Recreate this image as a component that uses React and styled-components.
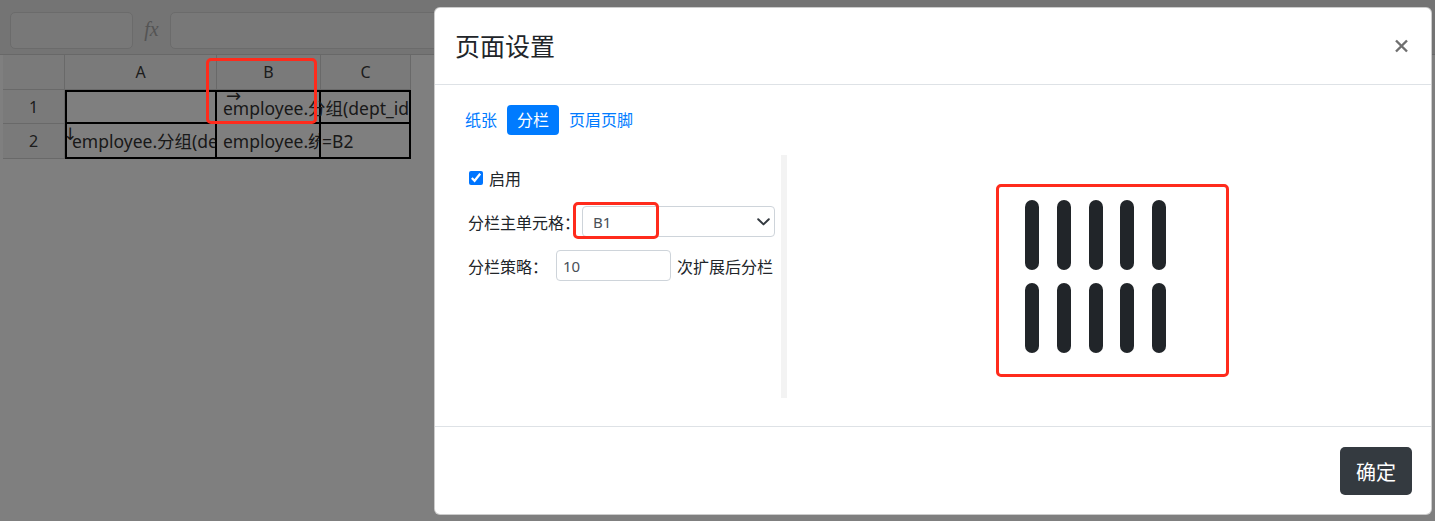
import React from 'react';
import styled, { createGlobalStyle } from 'styled-components';

const GlobalStyle = createGlobalStyle`
  html, body { margin: 0; padding: 0; }
  body {
    font-family: "Noto Sans", "Noto Sans CJK SC", sans-serif;
    overflow: hidden;
    background: #fff;
  }
  *, *::before, *::after { box-sizing: border-box; }
`;

const Page = styled.div`
  position: relative;
  width: 1435px;
  height: 521px;
  overflow: hidden;
  display: flex;
  flex-direction: column;
  background: #fff;
`;

/* ---------- spreadsheet underneath ---------- */
const Toolbar = styled.div`
  height: 55px;
  flex: none;
  display: flex;
  align-items: flex-start;
  padding: 12px 10px 0 10px;
  background: #e8e8e8;
  border-bottom: 1px solid #d0d0d0;
`;

const NameBox = styled.div`
  width: 123px;
  height: 37px;
  background: #f0f0f0;
  border: 1px solid #d6d6d6;
  border-radius: 5px;
`;

const FxIcon = styled.span`
  width: 37px;
  height: 37px;
  line-height: 34px;
  text-align: center;
  font-family: "Liberation Serif", serif;
  font-style: italic;
  font-size: 20px;
  color: #a8a8a8;
`;

const FormulaBox = styled.div`
  flex: 1;
  height: 37px;
  background: #f0f0f0;
  border: 1px solid #d6d6d6;
  border-radius: 5px;
`;

const Grid = styled.div`
  margin-left: 3px;
  width: 408px;
  display: grid;
  grid-template-columns: 62px 152px 104px 90px;
  grid-template-rows: 35px 34px 35px;
  overflow: hidden;
  background: #fff;
  font-family: "Noto Sans", "Noto Sans CJK SC", sans-serif;
`;

const HeadCell = styled.div`
  display: flex;
  align-items: center;
  justify-content: center;
  background: #f4f4f4;
  border-right: 1px solid #d2d2d2;
  border-bottom: 1px solid #d2d2d2;
  font-size: 16px;
  color: #3a3a3a;
`;

const DataCell = styled.div`
  position: relative;
  display: flex;
  align-items: center;
  padding-left: ${p => p.$pad || 6}px;
  white-space: nowrap;
  overflow: ${p => (p.$spill ? 'visible' : 'hidden')};
  border-right: 2px solid #000;
  border-bottom: 2px solid #000;
  border-left: ${p => (p.$l ? '2px solid #000' : 'none')};
  border-top: ${p => (p.$t ? '2px solid #000' : 'none')};
  font-size: 17.5px;
  color: #333;
`;

const DirMark = styled.span`
  position: absolute;
  left: ${p => p.$x}px;
  top: ${p => p.$y}px;
  font-family: "DejaVu Sans", sans-serif;
  font-size: ${p => p.$size}px;
  line-height: 1;
  color: #333;
`;

const SheetRest = styled.div`
  flex: 1;
  background: #fff;
`;

/* ---------- modal ---------- */
const Backdrop = styled.div`
  position: absolute;
  inset: 0;
  background: rgba(0, 0, 0, 0.5);
`;

const Modal = styled.div`
  position: absolute;
  left: 434px;
  top: 7px;
  width: 998px;
  display: flex;
  flex-direction: column;
  background: #fff;
  border: 1px solid rgba(0, 0, 0, 0.2);
  border-radius: 6px;
  color: #212529;
`;

const ModalHeader = styled.div`
  height: 77px;
  padding: 0 20px;
  display: flex;
  align-items: center;
  justify-content: space-between;
  border-bottom: 1px solid #dee2e6;
`;

const Title = styled.h4`
  margin: 0;
  padding-top: 2px;
  font-size: 25px;
  font-weight: 400;
  line-height: 1.5;
  color: #212529;
`;

const CloseButton = styled.button`
  border: 0;
  background: none;
  padding: 0;
  margin-right: 3px;
  width: 13px;
  height: 14px;
  display: flex;
  color: #6f6f6f;
`;

const ModalBody = styled.div`
  height: 341px;
  padding: 20px 20px 28px;
  display: flex;
  flex-direction: column;
`;

const Tabs = styled.div`
  display: flex;
  height: 30px;
`;

const Tab = styled.span`
  padding: 3px 10px;
  font-size: 16px;
  line-height: 24px;
  border-radius: 4px;
  color: ${p => (p.$active ? '#fff' : '#007bff')};
  background: ${p => (p.$active ? '#007bff' : 'transparent')};
`;

const Content = styled.div`
  margin-top: 20px;
  height: 243px;
  display: flex;
`;

const LeftCol = styled.div`
  width: 326px;
  padding: 8px 0 0 13px;
  display: flex;
  flex-direction: column;
  gap: 13px;
`;

const Divider = styled.div`
  width: 6px;
  background: #f3f3f3;
`;

const RightCol = styled.div`
  flex: 1;
  display: flex;
  align-items: center;
  justify-content: center;
  padding-right: 7px;
`;

const FormRow = styled.div`
  display: flex;
  align-items: center;
  height: ${p => p.$h || 31}px;
  font-size: 16px;
  color: #212529;
  white-space: nowrap;
`;

const Check = styled.input`
  width: 14px;
  height: 14px;
  margin: 0 6px 0 1px;
  accent-color: #0075ff;
`;

const SelectWrap = styled.div`
  position: relative;
  margin-left: 2px;
  width: 193px;
  height: 31px;
`;

const Select = styled.select`
  appearance: none;
  width: 100%;
  height: 100%;
  padding: 0 28px 0 10px;
  border: 1px solid #ced4da;
  border-radius: 4px;
  background: #fff;
  font-family: "Noto Sans", "Noto Sans CJK SC", sans-serif;
  font-size: 15px;
  color: #495057;
`;

const Chevron = styled.svg`
  position: absolute;
  right: 5px;
  top: 12px;
  pointer-events: none;
`;

const NumInput = styled.input`
  width: 115px;
  height: 31px;
  margin-left: 8px;
  margin-right: 6px;
  padding: 0 6px;
  border: 1px solid #ced4da;
  border-radius: 4px;
  font-family: "Noto Sans", "Noto Sans CJK SC", sans-serif;
  font-size: 15px;
  color: #495057;
`;

const PillGrid = styled.div`
  display: grid;
  grid-template-columns: repeat(5, 14px);
  grid-auto-rows: 70px;
  column-gap: 17.6px;
  row-gap: 13px;
`;

const Pill = styled.div`
  background: #212529;
  border-radius: 7px;
`;

const ModalFooter = styled.div`
  height: 88px;
  padding: 20px 19px 19px 20px;
  display: flex;
  justify-content: flex-end;
  border-top: 1px solid #dee2e6;
`;

const DarkButton = styled.button`
  width: 72px;
  height: 48px;
  border: 0;
  border-radius: 5px;
  background: #343a40;
  color: #fff;
  font-family: "Noto Sans", "Noto Sans CJK SC", sans-serif;
  font-size: 20px;
  padding: 0;
`;

/* ---------- red annotation boxes ---------- */
const Annotation = styled.div`
  position: absolute;
  border: 3px solid #ff2b1c;
  border-radius: 5px;
`;

export default function App() {
  return (
    <Page>
      <GlobalStyle />
      <Toolbar>
        <NameBox />
        <FxIcon>fx</FxIcon>
        <FormulaBox />
      </Toolbar>
      <Grid>
        <HeadCell />
        <HeadCell>A</HeadCell>
        <HeadCell>B</HeadCell>
        <HeadCell>C</HeadCell>

        <HeadCell>1</HeadCell>
        <DataCell $l $t />
        <DataCell $t $spill>
          <DirMark $x={9} $y={-5} $size={18}>→</DirMark>
          employee.分组(dept_id)
        </DataCell>
        <DataCell $t />

        <HeadCell>2</HeadCell>
        <DataCell $l $pad={5}>
          <DirMark $x={-4} $y={2} $size={17}>↓</DirMark>
          employee.分组(dept_id)
        </DataCell>
        <DataCell>employee.统计(salary)</DataCell>
        <DataCell $pad={1}>=B2</DataCell>
      </Grid>
      <SheetRest />

      <Backdrop />

      <Modal>
        <ModalHeader>
          <Title>页面设置</Title>
          <CloseButton aria-label="close">
            <svg width="13" height="14" viewBox="0 0 13 14">
              <path d="M1 1.5 L12 12.5 M12 1.5 L1 12.5" stroke="currentColor" strokeWidth="2.4" fill="none" />
            </svg>
          </CloseButton>
        </ModalHeader>
        <ModalBody>
          <Tabs>
            <Tab>纸张</Tab>
            <Tab $active>分栏</Tab>
            <Tab>页眉页脚</Tab>
          </Tabs>
          <Content>
            <LeftCol>
              <FormRow $h={30}>
                <Check type="checkbox" defaultChecked />
                启用
              </FormRow>
              <FormRow>
                分栏主单元格：
                <SelectWrap>
                  <Select defaultValue="B1">
                    <option value="B1">B1</option>
                  </Select>
                  <Chevron width="13" height="8" viewBox="0 0 13 8">
                    <path d="M1.2 1.2 L6.5 6.4 L11.8 1.2" stroke="#343a40" strokeWidth="2" fill="none" strokeLinecap="round" strokeLinejoin="round" />
                  </Chevron>
                </SelectWrap>
              </FormRow>
              <FormRow>
                分栏策略：
                <NumInput defaultValue="10" />
                次扩展后分栏
              </FormRow>
            </LeftCol>
            <Divider />
            <RightCol>
              <PillGrid>
                {Array.from({ length: 10 }).map((_, i) => (
                  <Pill key={i} />
                ))}
              </PillGrid>
            </RightCol>
          </Content>
        </ModalBody>
        <ModalFooter>
          <DarkButton>确定</DarkButton>
        </ModalFooter>
      </Modal>

      <Annotation style={{ left: 206, top: 58, width: 111, height: 66 }} />
      <Annotation style={{ left: 573, top: 202, width: 86, height: 37 }} />
      <Annotation style={{ left: 996, top: 184, width: 233, height: 193 }} />
    </Page>
  );
}
